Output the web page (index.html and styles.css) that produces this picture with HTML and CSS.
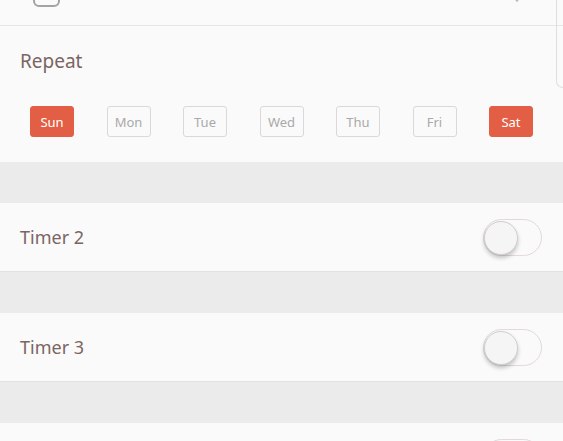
FILE: index.html
```html
<!DOCTYPE html>
<html>
<head>
<meta name="viewport" content="width=device-width, initial-scale=1.0">
<link rel="stylesheet" href="styles.css">
</head>
<body>

<div class="screen">
  <div class="top-row">
    <div class="check"></div>
    <svg class="chev" width="12" height="6" viewBox="0 0 12 6"><path d="M2 -4 L6 1 L10 -4" fill="none" stroke="#bbb" stroke-width="1.5"/></svg>
  </div>

  <div class="repeat">
    <p class="repeat-title">Repeat</p>
    <div class="days">
      <span class="day on">Sun</span>
      <span class="day">Mon</span>
      <span class="day">Tue</span>
      <span class="day">Wed</span>
      <span class="day">Thu</span>
      <span class="day">Fri</span>
      <span class="day on">Sat</span>
    </div>
  </div>

  <div class="gap"></div>
  <div class="timer">
    <span class="timer-name">Timer 2</span>
    <span class="toggle"><span class="knob"></span></span>
  </div>

  <div class="gap"></div>
  <div class="timer">
    <span class="timer-name">Timer 3</span>
    <span class="toggle"><span class="knob"></span></span>
  </div>

  <div class="gap"></div>
  <div class="timer last">
    <span class="toggle"><span class="knob"></span></span>
  </div>

  <div class="scroll-edge"></div>
</div>

</body>
</html>
```

FILE: styles.css
```css
* {box-sizing: border-box;}

body {
  margin: 0;
  background-color: #ebebeb;
  font-family: "Noto Sans", "DejaVu Sans", sans-serif;
  color: #7a6563;
}

.screen {
  position: relative;
  width: 563px;
  height: 441px;
  overflow: hidden;
}

.top-row {
  height: 26px;
  background-color: #fafafa;
  border-bottom: 1px solid #e6e6e6;
  display: flex;
  align-items: flex-end;
  overflow: hidden;
  padding-left: 33px;
  padding-bottom: 18px;
  position: relative;
}

.check {
  width: 27px;
  height: 27px;
  border: 2px solid #a3a3a3;
  border-radius: 6px;
  flex-shrink: 0;
}

.chev {
  position: absolute;
  left: 511px;
  top: 0;
}

.repeat {
  height: 136px;
  background-color: #fafafa;
  padding: 22px 30px 0 20px;
}

.repeat-title {
  margin: 0;
  font-size: 19px;
  line-height: 26px;
}

.days {
  display: flex;
  justify-content: space-between;
  margin-top: 32px;
  padding-left: 10px;
}

.day {
  width: 44px;
  height: 31px;
  border: 1px solid #d9d9d9;
  border-radius: 3px;
  display: flex;
  align-items: center;
  justify-content: center;
  font-size: 13px;
  color: #a9a9a9;
}

.day.on {
  background-color: #e25f45;
  border-color: #e25f45;
  color: #fff;
}

.gap {
  height: 41px;
}

.timer {
  height: 69px;
  background-color: #fafafa;
  border-bottom: 1px solid #e3e3e3;
  display: flex;
  align-items: center;
  justify-content: space-between;
  padding: 0 21px 0 20px;
}

.timer.last {
  justify-content: flex-end;
}

.timer-name {
  font-size: 18px;
}

.toggle {
  position: relative;
  width: 59px;
  height: 37px;
  border: 1.5px solid #e2d9d8;
  border-radius: 19px;
}

.knob {
  position: absolute;
  left: 0;
  top: 1px;
  width: 34px;
  height: 34px;
  border-radius: 50%;
  background-color: #f5f5f5;
  border: 1px solid #cfcfcf;
  box-shadow: 0 3px 4px rgba(0,0,0,0.22);
}

.scroll-edge {
  position: absolute;
  right: 0;
  top: -10px;
  width: 7px;
  height: 98px;
  border-left: 1.5px solid #dedede;
  border-bottom: 1.5px solid #dedede;
  border-bottom-left-radius: 7px;
}
```
